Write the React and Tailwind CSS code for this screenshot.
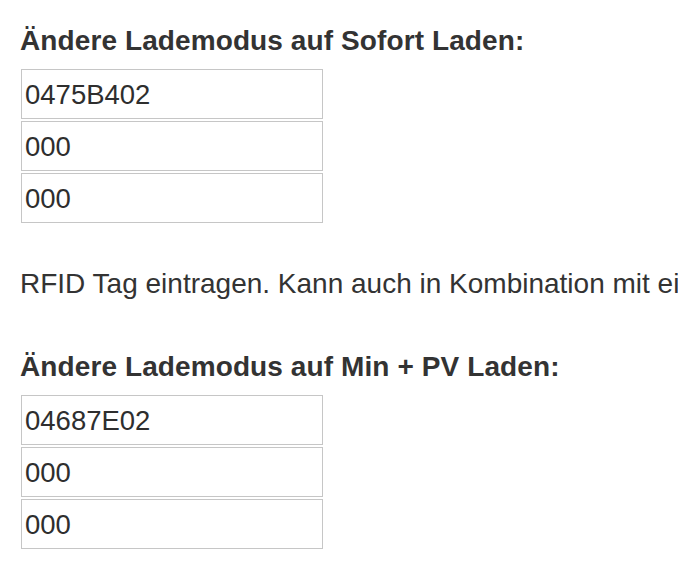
import React from 'react';

const GROUPS = [
  { title: 'Ändere Lademodus auf Sofort Laden:', tags: ['0475B402', '000', '000'] },
  { title: 'Ändere Lademodus auf Min + PV Laden:', tags: ['04687E02', '000', '000'] },
];

function TagInputs({ tags }) {
  return (
    <div className="flex flex-col gap-[2px]">
      {tags.map((tag, i) => (
        <input
          key={i}
          type="text"
          defaultValue={tag}
          className="block w-[302px] h-[50px] ml-px border-[1.5px] border-[#c6c6c6] bg-white pl-[3px] pt-[2px] text-[27.5px] text-[#2e2e2e] outline-none font-['Liberation_Sans',Arial,sans-serif]"
        />
      ))}
    </div>
  );
}

export default function App() {
  return (
    <div className="w-full h-[578px] overflow-hidden bg-white pl-[20px] pt-[25px] text-[#333333] font-['Liberation_Sans',Arial,sans-serif]">
      <h3 className="text-[28px] leading-[32px] font-bold mb-[12px] whitespace-nowrap tracking-[0.1px]">{GROUPS[0].title}</h3>
      <TagInputs tags={GROUPS[0].tags} />

      <p className="mt-[45px] text-[28px] leading-[32px] whitespace-nowrap">
        RFID Tag eintragen. Kann auch in Kombination mit einem Ladepunkt verwendet werden.
      </p>

      <h3 className="mt-[51px] text-[28px] leading-[32px] font-bold mb-[12px] whitespace-nowrap tracking-[0.1px]">{GROUPS[1].title}</h3>
      <TagInputs tags={GROUPS[1].tags} />
    </div>
  );
}
